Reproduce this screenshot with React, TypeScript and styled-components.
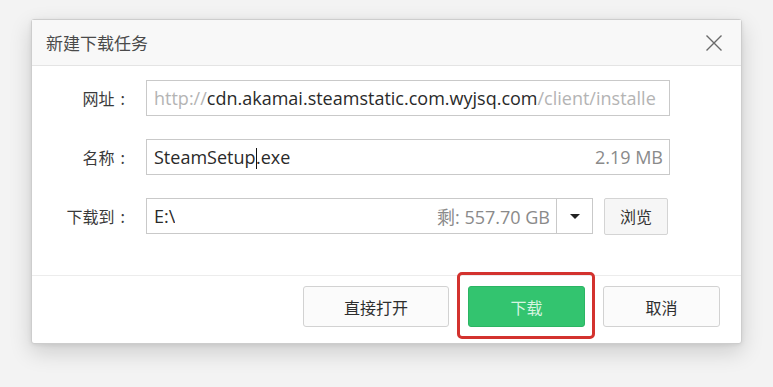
import React from "react";
import styled, { createGlobalStyle } from "styled-components";

const GlobalStyle = createGlobalStyle`
  html, body {
    margin: 0;
    padding: 0;
    background: #f3f3f3;
  }
  body {
    font-family: "Noto Sans", "Noto Sans CJK SC", sans-serif;
  }
`;

const Page = styled.div`
  width: 773px;
  height: 387px;
  padding: 19px 0 0 31px;
  box-sizing: border-box;
`;

const Dialog = styled.div`
  width: 711px;
  height: 325px;
  box-sizing: border-box;
  background: #fff;
  border: 1px solid #cdcdcd;
  border-radius: 3px;
  box-shadow: 0 8px 22px rgba(0, 0, 0, 0.16), 0 1px 4px rgba(0, 0, 0, 0.08);
  display: flex;
  flex-direction: column;
`;

const TitleBar = styled.div`
  height: 46px;
  flex: none;
  box-sizing: border-box;
  display: flex;
  align-items: center;
  justify-content: space-between;
  padding: 0 14px 0 14px;
  background: #f8f8f8;
  border-bottom: 1px solid #e4e4e4;
`;

const Title = styled.div`
  font-size: 17px;
  color: #4a4a4a;
  font-family: "Noto Sans CJK SC", sans-serif;
`;

const CloseButton = styled.button`
  width: 26px;
  height: 26px;
  border: none;
  background: transparent;
  padding: 0;
  display: flex;
  align-items: center;
  justify-content: center;
`;

const Body = styled.div`
  flex: 1;
  display: flex;
  flex-direction: column;
  gap: 23px;
  padding-top: 14px;
  border-bottom: 1px solid #ececec;
`;

const Row = styled.div`
  display: flex;
  align-items: center;
  height: 36px;
`;

const Label = styled.div`
  width: 93px;
  flex: none;
  display: flex;
  justify-content: flex-end;
  align-items: center;
  font-size: 16px;
  color: #3a3a3a;
  font-family: "Noto Sans CJK SC", sans-serif;
  margin-right: 21px;
`;

const Colon = styled.span`
  margin-left: 6px;
`;

const Field = styled.div<{ $width: number }>`
  width: ${(p) => p.$width}px;
  height: 36px;
  box-sizing: border-box;
  border: 1px solid #c9c9c9;
  background: #fff;
  display: flex;
  align-items: center;
  justify-content: space-between;
  padding: 0 6px 0 7px;
  overflow: hidden;
  white-space: nowrap;
  font-size: 18px;
  color: #2a2a2a;
  font-family: "Open Sans", "Noto Sans CJK SC", sans-serif;
`;

const Value = styled.span`
  overflow: hidden;
`;

const Faint = styled.span`
  color: #b4b4b4;
`;

const Hint = styled.span`
  color: #8a8a8a;
  flex: none;
`;

const Caret = styled.span`
  display: inline-block;
  width: 1.5px;
  height: 21px;
  background: #111;
  vertical-align: middle;
  margin: 0 -1px 0 0;
`;

const Dropdown = styled.div`
  width: 36px;
  height: 36px;
  box-sizing: border-box;
  border: 1px solid #c9c9c9;
  border-left: none;
  display: flex;
  align-items: center;
  justify-content: center;
`;

const Triangle = styled.span`
  width: 0;
  height: 0;
  border-left: 5px solid transparent;
  border-right: 5px solid transparent;
  border-top: 5px solid #222;
`;

const SmallButton = styled.button`
  margin-left: 11px;
  width: 64px;
  height: 37px;
  box-sizing: border-box;
  border: 1px solid #d4d4d4;
  border-radius: 2px;
  background: #f6f6f6;
  font-size: 16px;
  color: #333;
  font-family: "Noto Sans CJK SC", sans-serif;
  padding: 0;
`;

const Footer = styled.div`
  height: 67px;
  flex: none;
  display: flex;
  justify-content: flex-end;
  align-items: flex-start;
  gap: 18px;
  padding: 10px 21px 0 0;
  box-sizing: border-box;
`;

const Button = styled.button<{ $primary?: boolean; $width: number }>`
  width: ${(p) => p.$width}px;
  height: 41px;
  box-sizing: border-box;
  border-radius: 3px;
  border: 1px solid ${(p) => (p.$primary ? "#2bb563" : "#d2d2d2")};
  background: ${(p) => (p.$primary ? "#33c46f" : "#fbfbfb")};
  color: ${(p) => (p.$primary ? "#d6f5e0" : "#2e2e2e")};
  font-size: 16px;
  font-family: "Noto Sans CJK SC", sans-serif;
  padding: 0;
`;

const Highlight = styled.div`
  position: relative;
  margin-left: 1px;
  &::after {
    content: "";
    position: absolute;
    top: -14px;
    left: -11px;
    right: -10px;
    bottom: -12px;
    border: 3px solid #d3322e;
    border-radius: 5px;
    pointer-events: none;
  }
`;

export default function App() {
  return (
    <Page>
      <GlobalStyle />
      <Dialog>
        <TitleBar>
          <Title>新建下载任务</Title>
          <CloseButton>
            <svg width="18" height="18" viewBox="0 0 18 18">
              <path d="M1.5 1.5 L16.5 16.5 M16.5 1.5 L1.5 16.5" stroke="#6a6a6a" strokeWidth="1.4" fill="none" />
            </svg>
          </CloseButton>
        </TitleBar>
        <Body>
          <Row>
            <Label>
              网址<Colon>:</Colon>
            </Label>
            <Field $width={524}>
              <Value>
                <Faint>http://</Faint>cdn.akamai.steamstatic.com.wyjsq.com<Faint>/client/installe</Faint>
              </Value>
            </Field>
          </Row>
          <Row>
            <Label>
              名称<Colon>:</Colon>
            </Label>
            <Field $width={524}>
              <Value>
                SteamSetup<Caret />.exe
              </Value>
              <Hint>2.19 MB</Hint>
            </Field>
          </Row>
          <Row>
            <Label>
              下载到<Colon>:</Colon>
            </Label>
            <Field $width={411}>
              <Value>E:\</Value>
              <Hint>剩: 557.70 GB</Hint>
            </Field>
            <Dropdown>
              <Triangle />
            </Dropdown>
            <SmallButton>浏览</SmallButton>
          </Row>
        </Body>
        <Footer>
          <Button $width={146}>直接打开</Button>
          <Highlight>
            <Button $primary $width={117}>下载</Button>
          </Highlight>
          <Button $width={117}>取消</Button>
        </Footer>
      </Dialog>
    </Page>
  );
}
